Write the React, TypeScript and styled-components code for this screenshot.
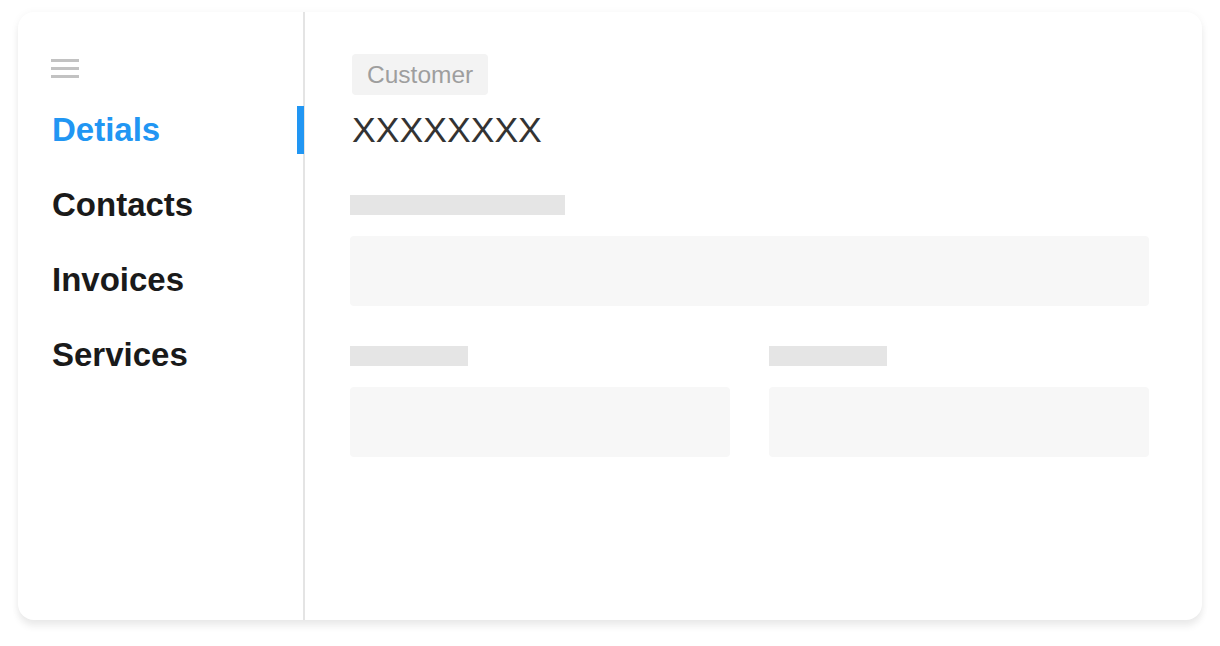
import React from "react";
import styled, { createGlobalStyle } from "styled-components";

const Global = createGlobalStyle`
  html, body { margin: 0; padding: 0; background: #ffffff; }
  body { font-family: "Liberation Sans", Arial, sans-serif; }
  * { box-sizing: border-box; }
`;

const Page = styled.div`
  width: 1220px;
  height: 646px;
  padding: 12px 18px 26px 18px;
`;

const Card = styled.div`
  display: flex;
  height: 608px;
  background: #ffffff;
  border-radius: 16px;
  box-shadow: 0 7px 7px rgba(0, 0, 0, 0.06), 0 1px 8px rgba(0, 0, 0, 0.05);
  overflow: hidden;
`;

const Sidebar = styled.aside`
  width: 287px;
  flex: none;
  border-right: 2px solid #e4e4e4;
  padding: 47px 0 0 33px;
  display: flex;
  flex-direction: column;
`;

const Burger = styled.button`
  width: 28px;
  height: 19px;
  margin: 0 0 28px 0;
  padding: 0;
  border: none;
  background: none;
  display: flex;
  flex-direction: column;
  justify-content: space-between;
  cursor: pointer;
  span {
    display: block;
    height: 3px;
    background: #c2c2c2;
  }
`;

const Nav = styled.nav`
  display: flex;
  flex-direction: column;
  gap: 27px;
`;

const NavItem = styled.div<{ $active?: boolean }>`
  position: relative;
  height: 48px;
  line-height: 47px;
  padding-left: 1px;
  font-size: 33px;
  font-weight: 700;
  color: ${(p) => (p.$active ? "#2196f3" : "#1a1a1a")};
  cursor: pointer;
`;

const Indicator = styled.span`
  position: absolute;
  top: 0;
  right: -1px;
  width: 7px;
  height: 48px;
  background: #2196f3;
`;

const Main = styled.main`
  flex: 1;
  padding: 42px 53px 0 45px;
  display: flex;
  flex-direction: column;
`;

const Tag = styled.span`
  align-self: flex-start;
  margin-left: 2px;
  height: 41px;
  line-height: 42px;
  padding: 0 15px 0 15px;
  background: #f3f3f3;
  border-radius: 4px;
  color: #9e9e9e;
  font-size: 24.5px;
`;

const Title = styled.h1`
  margin: 15px 0 0 2px;
  font-size: 35.6px;
  font-weight: 400;
  line-height: 40px;
  color: #333333;
`;

const Field = styled.div<{ $top: number }>`
  margin-top: ${(p) => p.$top}px;
  display: flex;
  flex-direction: column;
  gap: 21px;
`;

const LabelBar = styled.div<{ $w: number }>`
  width: ${(p) => p.$w}px;
  height: 20px;
  background: #e5e5e5;
`;

const InputBox = styled.div`
  height: 70px;
  background: #f7f7f7;
  border-radius: 4px;
`;

const Row = styled.div`
  display: grid;
  grid-template-columns: 1fr 1fr;
  gap: 39px;
  margin-top: 40px;
`;

export default function App() {
  const items = ["Detials", "Contacts", "Invoices", "Services"];
  return (
    <>
      <Global />
      <Page>
        <Card>
          <Sidebar>
            <Burger aria-label="menu">
              <span />
              <span />
              <span />
            </Burger>
            <Nav>
              {items.map((t, i) => (
                <NavItem key={t} $active={i === 0}>
                  {t}
                  {i === 0 && <Indicator />}
                </NavItem>
              ))}
            </Nav>
          </Sidebar>
          <Main>
            <Tag>Customer</Tag>
            <Title>XXXXXXXX</Title>
            <Field $top={45}>
              <LabelBar $w={215} />
              <InputBox />
            </Field>
            <Row>
              <Field $top={0}>
                <LabelBar $w={118} />
                <InputBox />
              </Field>
              <Field $top={0}>
                <LabelBar $w={118} />
                <InputBox />
              </Field>
            </Row>
          </Main>
        </Card>
      </Page>
    </>
  );
}
